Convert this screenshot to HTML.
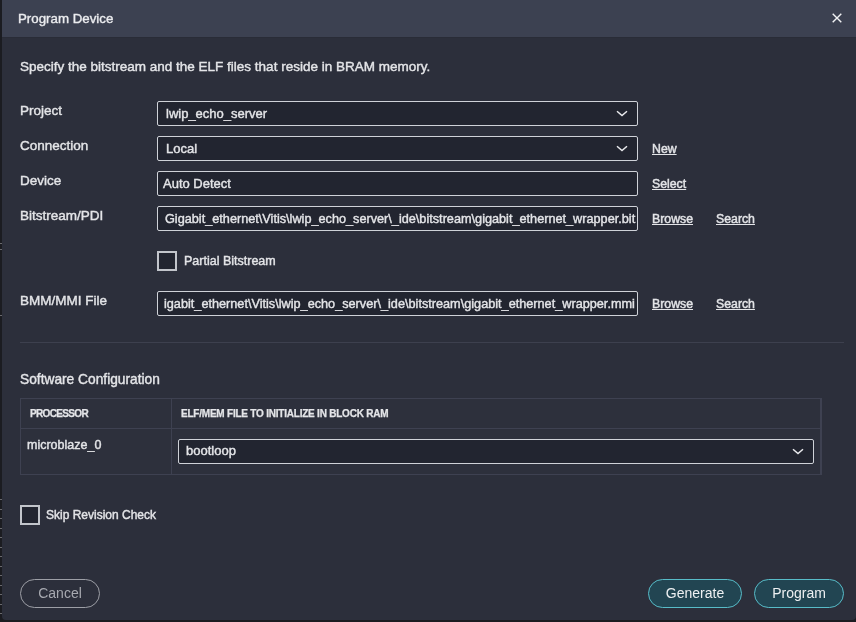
<!DOCTYPE html>
<html><head><meta charset="utf-8">
<style>
*{margin:0;padding:0;box-sizing:border-box}
html,body{width:856px;height:622px;overflow:hidden;background:#1b1c21;font-family:"Liberation Sans",sans-serif}
.t,.v,.lnk,.btn{will-change:transform}
#bgticks{position:absolute;left:0;top:490px;width:2px;height:130px;background:repeating-linear-gradient(to bottom,transparent 0,transparent 9px,#6a6a6e 9px,#6a6a6e 10px)}
#dlg{position:absolute;left:2px;top:0;width:854px;height:620px;background:#2c2f3b;border-radius:0 0 4px 4px;overflow:hidden}
#title{position:absolute;left:0;top:0;width:854px;height:37px;background:#3c4151;border-bottom:0}
#tline{position:absolute;left:0;top:37px;width:854px;height:1px;background:#292c37}
.t{position:absolute;white-space:nowrap;line-height:16px;color:#e4e5e8;-webkit-text-stroke:0.4px #e4e5e8}
.box{position:absolute;border:1px solid #cfd2d8;border-radius:2px;background:#222530;overflow:hidden}
.box .v{position:absolute;white-space:nowrap;line-height:16px;color:#e4e5e8;font-size:13px;-webkit-text-stroke:0.4px #e4e5e8}
.chev{position:absolute;width:12px;height:7px}
.lnk{position:absolute;white-space:nowrap;line-height:16px;color:#e4e5e8;font-size:12.3px;text-decoration:underline;text-underline-offset:1px;-webkit-text-stroke:0.45px #e4e5e8}
.cb{position:absolute;width:20px;height:20px;border:2px solid #c2c5cb;background:#222530}
.btn{position:absolute;height:29px;border-radius:15px;font-size:14px;line-height:27px;text-align:center}
</style></head><body>
<div style="position:absolute;left:0;top:243px;width:2px;height:1px;background:#6a6a6e"></div><div style="position:absolute;left:0;top:249px;width:2px;height:1px;background:#6a6a6e"></div><div style="position:absolute;left:0;top:315px;width:2px;height:1px;background:#6a6a6e"></div><div style="position:absolute;left:0;top:499px;width:2px;height:1px;background:#6a6a6e"></div><div style="position:absolute;left:0;top:509px;width:2px;height:1px;background:#6a6a6e"></div><div style="position:absolute;left:0;top:518px;width:2px;height:1px;background:#6a6a6e"></div><div style="position:absolute;left:0;top:528px;width:2px;height:1px;background:#6a6a6e"></div><div style="position:absolute;left:0;top:537px;width:2px;height:1px;background:#6a6a6e"></div><div style="position:absolute;left:0;top:547px;width:2px;height:1px;background:#6a6a6e"></div><div style="position:absolute;left:0;top:556px;width:2px;height:1px;background:#6a6a6e"></div><div style="position:absolute;left:0;top:566px;width:2px;height:1px;background:#6a6a6e"></div><div style="position:absolute;left:0;top:575px;width:2px;height:1px;background:#6a6a6e"></div><div style="position:absolute;left:0;top:585px;width:2px;height:1px;background:#6a6a6e"></div><div style="position:absolute;left:0;top:594px;width:2px;height:1px;background:#6a6a6e"></div><div style="position:absolute;left:0;top:604px;width:2px;height:1px;background:#6a6a6e"></div><div style="position:absolute;left:0;top:613px;width:2px;height:1px;background:#6a6a6e"></div>
<div id="dlg">
  <div id="title"></div>
  <div id="tline"></div>
</div>
<!-- title -->
<div class="t" style="left:17.6px;top:11px;font-size:13.3px;color:#f0f1f4">Program Device</div>
<svg style="position:absolute;left:831px;top:12px" width="12" height="12" viewBox="0 0 12 12"><path d="M1.7 1.7L10.3 10.3M10.3 1.7L1.7 10.3" stroke="#f2f3f5" stroke-width="1.4" fill="none"/></svg>

<div class="t" style="left:20px;top:58.5px;font-size:13.5px">Specify the bitstream and the ELF files that reside in BRAM memory.</div>

<div class="t" style="left:20px;top:103px;font-size:13.5px">Project</div>
<div class="t" style="left:20px;top:138px;font-size:13.5px">Connection</div>
<div class="t" style="left:20px;top:173px;font-size:13.5px">Device</div>
<div class="t" style="left:20px;top:208px;font-size:13.5px">Bitstream/PDI</div>
<div class="t" style="left:20px;top:293px;font-size:13.5px">BMM/MMI File</div>

<div class="box" style="left:157px;top:101px;width:481px;height:25px"><div class="v" style="left:8px;top:4px">lwip_echo_server</div>
<svg class="chev" style="right:9px;top:8px" viewBox="0 0 12 7"><path d="M1 1.2L6 5.6L11 1.2" stroke="#e8e9ec" stroke-width="1.5" fill="none"/></svg></div>
<div class="box" style="left:157px;top:136px;width:481px;height:25px"><div class="v" style="left:8px;top:4px">Local</div>
<svg class="chev" style="right:9px;top:8px" viewBox="0 0 12 7"><path d="M1 1.2L6 5.6L11 1.2" stroke="#e8e9ec" stroke-width="1.5" fill="none"/></svg></div>
<div class="box" style="left:157px;top:171px;width:481px;height:25px"><div class="v" style="left:5px;top:4px">Auto Detect</div></div>
<div class="box" style="left:157px;top:206px;width:481px;height:25px"><div class="v" style="right:2px;top:4px;font-size:12.7px">Gigabit_ethernet\Vitis\lwip_echo_server\_ide\bitstream\gigabit_ethernet_wrapper.bit</div></div>
<div class="box" style="left:157px;top:291px;width:481px;height:25px"><div class="v" style="right:2px;top:4px;font-size:12.7px">igabit_ethernet\Vitis\lwip_echo_server\_ide\bitstream\gigabit_ethernet_wrapper.mmi</div></div>

<div class="lnk" style="left:652px;top:141px">New</div>
<div class="lnk" style="left:652px;top:176px">Select</div>
<div class="lnk" style="left:652px;top:211px">Browse</div>
<div class="lnk" style="left:716px;top:211px">Search</div>
<div class="lnk" style="left:652px;top:296px">Browse</div>
<div class="lnk" style="left:716px;top:296px">Search</div>

<div class="cb" style="left:157px;top:251px"></div>
<div class="t" style="left:184px;top:253px;font-size:12.5px">Partial Bitstream</div>

<div style="position:absolute;left:20px;top:342px;width:824px;height:1px;background:#3d404e"></div>
<div class="t" style="left:20px;top:372px;font-size:13.75px">Software Configuration</div>

<!-- table -->
<div style="position:absolute;left:20px;top:398px;width:802px;height:77px;border:1px solid #3e4151;border-right-width:2px;background:#2d303c"></div>
<div style="position:absolute;left:21px;top:428px;width:800px;height:1px;background:#3e4151"></div>
<div style="position:absolute;left:171px;top:399px;width:1px;height:75px;background:#3e4151"></div>
<div class="t" style="left:30px;top:406px;font-size:10px;font-weight:bold;letter-spacing:-0.65px;-webkit-text-stroke:0.25px #e4e5e8">PROCESSOR</div>
<div class="t" style="left:181px;top:406px;font-size:10px;font-weight:bold;letter-spacing:-0.22px;-webkit-text-stroke:0.25px #e4e5e8">ELF/MEM FILE TO INITIALIZE IN BLOCK RAM</div>
<div class="t" style="left:27px;top:436.5px;font-size:12.5px">microblaze_0</div>
<div class="box" style="left:178px;top:439px;width:636px;height:25px"><div class="v" style="left:7px;top:3px">bootloop</div>
<svg class="chev" style="right:9px;top:8px" viewBox="0 0 12 7"><path d="M1 1.2L6 5.6L11 1.2" stroke="#e8e9ec" stroke-width="1.5" fill="none"/></svg></div>

<div class="cb" style="left:20px;top:505px"></div>
<div class="t" style="left:46px;top:507px;font-size:12px">Skip Revision Check</div>

<div class="btn" style="left:20px;top:579px;width:80px;border:1px solid #9d9fa6;color:#a7a9b0">Cancel</div>
<div class="btn" style="left:648px;top:579px;width:94px;border:1px solid #58bcc8;background:#224552;color:#eef0f2">Generate</div>
<div class="btn" style="left:754px;top:579px;width:90px;border:1px solid #58bcc8;background:#224552;color:#eef0f2">Program</div>
</body></html>
